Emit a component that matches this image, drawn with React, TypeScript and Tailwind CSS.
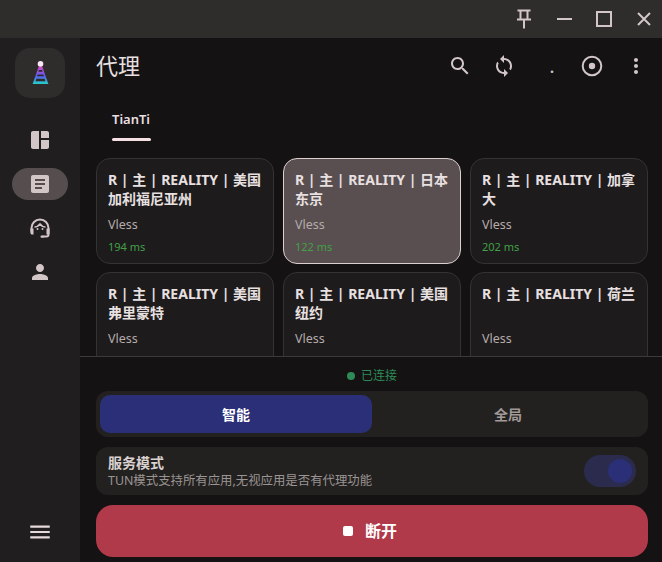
const FONT = "font-['Noto_Sans','Noto_Sans_CJK_SC',sans-serif]"

const proxies = [
  { name: "R | 主 | REALITY | 美国加利福尼亚州", delay: "194 ms" },
  { name: "R | 主 | REALITY | 日本东京", delay: "122 ms", active: true },
  { name: "R | 主 | REALITY | 加拿大", delay: "202 ms" },
  { name: "R | 主 | REALITY | 美国弗里蒙特", delay: "" },
  { name: "R | 主 | REALITY | 美国纽约", delay: "" },
  { name: "R | 主 | REALITY | 荷兰", delay: "" },
]

function Icon({ d, className }: { d: string; className: string }) {
  return (
    <svg viewBox="0 0 24 24" fill="currentColor" className={className}>
      <path d={d} />
    </svg>
  )
}

function Logo() {
  return (
    <svg viewBox="0 0 24 30" className="w-[21px] h-[27px]">
      <defs>
        <linearGradient id="cone" x1="0" y1="0" x2="0" y2="1">
          <stop offset="0" stopColor="#d946c8" />
          <stop offset="0.55" stopColor="#5b5cf0" />
          <stop offset="1" stopColor="#22d3c5" />
        </linearGradient>
      </defs>
      <path d="M10 7h4l7 20H3z" fill="url(#cone)" />
      <path d="M10.100 11h3.800l.5 2H9.600z M8.800 16h6.400l.7 2.200H8.100z M7.200 21h9.600l.8 2.800H6.400z" fill="#2f2d2c" />
      <circle cx="12" cy="4" r="3.200" fill="#fbe7f4" />
    </svg>
  )
}

function HeadsetIcon() {
  return (
    <svg viewBox="0 0 24 24" fill="none" className="w-[24px] h-[24px] text-[#d3c6c7]">
      <path d="M3.500 16.500v-4.500a8.500 8.500 0 0 1 17 0v6.500a2 2 0 0 1-2 2h-4" stroke="currentColor" strokeWidth="2" />
      <path d="M2.500 12.500h3v6h-1.500a1.500 1.500 0 0 1-1.500-1.500zM18.500 12.500h3v4.500a1.500 1.500 0 0 1-1.500 1.500h-1.500z" fill="currentColor" />
      <path d="M6.500 11c2.500 0 4-1 5.500-3 1.500 2 3 3 5.500 3" stroke="currentColor" strokeWidth="1.600" />
      <circle cx="9.500" cy="13" r="1" fill="currentColor" />
      <circle cx="14.500" cy="13" r="1" fill="currentColor" />
      <rect x="12.500" y="19.500" width="3.500" height="2.200" rx="1" fill="currentColor" />
    </svg>
  )
}

function Sidebar() {
  return (
    <aside className="w-[80px] shrink-0 bg-[#201e1f] flex flex-col items-center pt-[10px] pb-[17px]">
      <div className="w-[50px] h-[50px] rounded-[15px] bg-[#2f2d2c] flex items-center justify-center">
        <Logo />
      </div>
      <nav className="mt-[26px] flex flex-col items-center gap-[12px]">
        <div className="w-[56px] h-[32px] flex items-center justify-center">
          <Icon className="w-[24px] h-[24px] text-[#d3c6c7]" d="M11 21H5c-1.100 0-2-.9-2-2V5c0-1.100.9-2 2-2h6v18zm2 0h6c1.100 0 2-.9 2-2v-7h-8v9zm8-11V5c0-1.100-.9-2-2-2h-6v7h8z" />
        </div>
        <div className="w-[56px] h-[32px] rounded-full bg-[#564d4e] flex items-center justify-center">
          <Icon className="w-[24px] h-[24px] text-[#d3c6c7]" d="M19 3H5c-1.100 0-2 .9-2 2v14c0 1.100.9 2 2 2h14c1.100 0 2-.9 2-2V5c0-1.100-.9-2-2-2zm-5 14H7v-2h7v2zm3-4H7v-2h10v2zm0-4H7V7h10v2z" />
        </div>
        <div className="w-[56px] h-[32px] flex items-center justify-center">
          <HeadsetIcon />
        </div>
        <div className="w-[56px] h-[32px] flex items-center justify-center">
          <Icon className="w-[24px] h-[24px] text-[#d3c6c7]" d="M12 12c2.210 0 4-1.790 4-4s-1.790-4-4-4-4 1.790-4 4 1.790 4 4 4zm0 2c-2.670 0-8 1.340-8 4v2h16v-2c0-2.660-5.330-4-8-4z" />
        </div>
      </nav>
      <div className="mt-auto">
        <Icon className="w-[26px] h-[26px] text-[#e6d9da]" d="M3 18h18v-2H3v2zm0-5h18v-2H3v2zm0-7v2h18V6H3z" />
      </div>
    </aside>
  )
}

function TitleBar() {
  return (
    <div className="h-[38px] shrink-0 bg-[#2f2c2c] flex justify-end items-center text-[#d3c6c7]">
      <div className="w-[40px] flex justify-center">
        <svg viewBox="0 0 16 20" fill="none" stroke="currentColor" strokeWidth="2" className="w-[16px] h-[20px]">
          <path d="M1.500 1.500h13M4.500 1.500v8.500M11.500 1.500v8.500M1 10.500h14M8 10.500v9" />
        </svg>
      </div>
      <div className="w-[40px] flex justify-center">
        <div className="w-[15px] h-[2px] bg-[#d3c6c7]" />
      </div>
      <div className="w-[40px] flex justify-center">
        <div className="w-[16px] h-[16px] border-2 border-[#d3c6c7]" />
      </div>
      <div className="w-[40px] flex justify-center mr-[-2px]">
        <svg viewBox="0 0 16 16" fill="none" stroke="currentColor" strokeWidth="2" className="w-[16px] h-[16px]">
          <path d="M2 2l12 12M14 2L2 14" />
        </svg>
      </div>
    </div>
  )
}

function Header() {
  return (
    <header className="h-[56px] shrink-0 flex items-center pl-[16px]">
      <h1 className="text-[22px] leading-[30px] mt-[-2px] text-[#e8e0e0]">代理</h1>
      <div className="ml-auto flex items-center text-[#d3c6c7]">
        <div className="w-[44px] flex justify-center">
          <Icon className="w-[24px] h-[24px]" d="M15.500 14h-.79l-.28-.27C15.410 12.590 16 11.110 16 9.500 16 5.910 13.090 3 9.500 3S3 5.910 3 9.500 5.910 16 9.500 16c1.610 0 3.090-.59 4.230-1.570l.27.28v.79l5 4.990L20.490 19l-4.990-5zm-6 0C7.010 14 5 11.990 5 9.500S7.010 5 9.500 5 14 7.010 14 9.500 11.990 14 9.500 14z" />
        </div>
        <div className="w-[44px] flex justify-center">
          <Icon className="w-[24px] h-[24px]" d="M12 4V1L8 5l4 4V6c3.310 0 6 2.690 6 6 0 1.010-.25 1.970-.7 2.800l1.460 1.460C19.540 15.030 20 13.570 20 12c0-4.420-3.580-8-8-8zm0 14c-3.310 0-6-2.690-6-6 0-1.010.25-1.970.7-2.800L5.240 7.740C4.460 8.970 4 10.430 4 12c0 4.420 3.580 8 8 8v3l4-4-4-4v3z" />
        </div>
        <div className="w-[48px] h-[24px] pl-[4px] flex justify-center items-end text-[14px] leading-[20px] font-bold">.</div>
        <div className="w-[36px] flex justify-center">
          <svg viewBox="0 0 24 24" fill="none" className="w-[24px] h-[24px]">
            <circle cx="12" cy="12" r="9.300" stroke="currentColor" strokeWidth="2" />
            <circle cx="12" cy="12" r="3.200" fill="currentColor" />
          </svg>
        </div>
        <div className="w-[52px] flex justify-center">
          <Icon className="w-[24px] h-[24px]" d="M12 8c1.100 0 2-.9 2-2s-.9-2-2-2-2 .9-2 2 .9 2 2 2zm0 2c-1.100 0-2 .9-2 2s.9 2 2 2 2-.9 2-2-.9-2-2-2zm0 6c-1.100 0-2 .9-2 2s.9 2 2 2 2-.9 2-2-.9-2-2-2z" />
        </div>
      </div>
    </header>
  )
}

function ProxyCard({ name, delay, active }: { name: string; delay: string; active?: boolean }) {
  return (
    <div className={`h-[106px] rounded-[14px] border px-[11px] pt-[11px] ${active ? "bg-[#594f50] border-[#dccfd0]" : "bg-[#1d1b1c] border-[#353233]"}`}>
      <div className="h-[38px] text-[14px] leading-[19px] font-bold text-[#e8e0e0]">{name}</div>
      <div className="mt-[9px] text-[12.500px] leading-[16px] text-[#b5abab]">Vless</div>
      <div className="mt-[7px] text-[11px] leading-[14px] text-[#43a047]">{delay}</div>
    </div>
  )
}

function App() {
  return (
    <div className={`w-[662px] h-[562px] overflow-hidden flex flex-col bg-[#141213] ${FONT}`}>
      <TitleBar />
      <div className="flex-1 min-h-0 flex">
        <Sidebar />
        <main className="flex-1 min-w-0 flex flex-col">
          <Header />
          <div className="flex-1 min-h-0 overflow-hidden border-b border-[#3d393a]">
            <div className="px-[32px] pt-[15px] h-[48px]">
              <div className="w-[39px] text-[13px] leading-[20px] font-semibold text-[#eadfe0] whitespace-nowrap">TianTi</div>
              <div className="w-[39px] h-[3px] mt-[9px] rounded-full bg-[#f5e1e4]" />
            </div>
            <div className="grid grid-cols-3 gap-x-[9px] gap-y-[8px] pl-[16px] pr-[14px] pt-[16px]">
              {proxies.map((p) => (
                <ProxyCard key={p.name} {...p} />
              ))}
            </div>
          </div>
          <section className="shrink-0 pl-[16px] pr-[14px] pb-[5px]">
            <div className="h-[34px] pt-[4px] flex items-center justify-center gap-[6px] text-[12px] text-[#2e8b57]">
              <span className="w-[8px] h-[8px] rounded-full bg-[#2e8b57]" />
              已连接
            </div>
            <div className="h-[46px] rounded-[12px] bg-[#232120] p-[4px] grid grid-cols-2 text-[14px] font-bold">
              <div className="rounded-[10px] bg-[#2b2f77] flex items-center justify-center text-white">智能</div>
              <div className="flex items-center justify-center text-[#a09a98]">全局</div>
            </div>
            <div className="mt-[10px] h-[48px] rounded-[12px] bg-[#232120] px-[12px] flex items-center justify-between">
              <div>
                <div className="text-[14px] leading-[19px] font-bold text-[#d9d2d0]">服务模式</div>
                <div className="text-[12.400px] leading-[17px] text-[#9a9492]">TUN模式支持所有应用,无视应用是否有代理功能</div>
              </div>
              <div className="w-[52px] h-[32px] rounded-full bg-[#2b2b4d] flex items-center justify-end pr-[4px]">
                <div className="w-[24px] h-[24px] rounded-full bg-[#2b2f77]" />
              </div>
            </div>
            <div className="mt-[10px] h-[52px] rounded-[17px] bg-[#b0394a] pr-[4px] flex items-center justify-center gap-[12px] text-white">
              <span className="w-[10px] h-[10px] rounded-[2px] bg-white" />
              <span className="text-[16px] font-bold">断开</span>
            </div>
          </section>
        </main>
      </div>
    </div>
  )
}

export default App
